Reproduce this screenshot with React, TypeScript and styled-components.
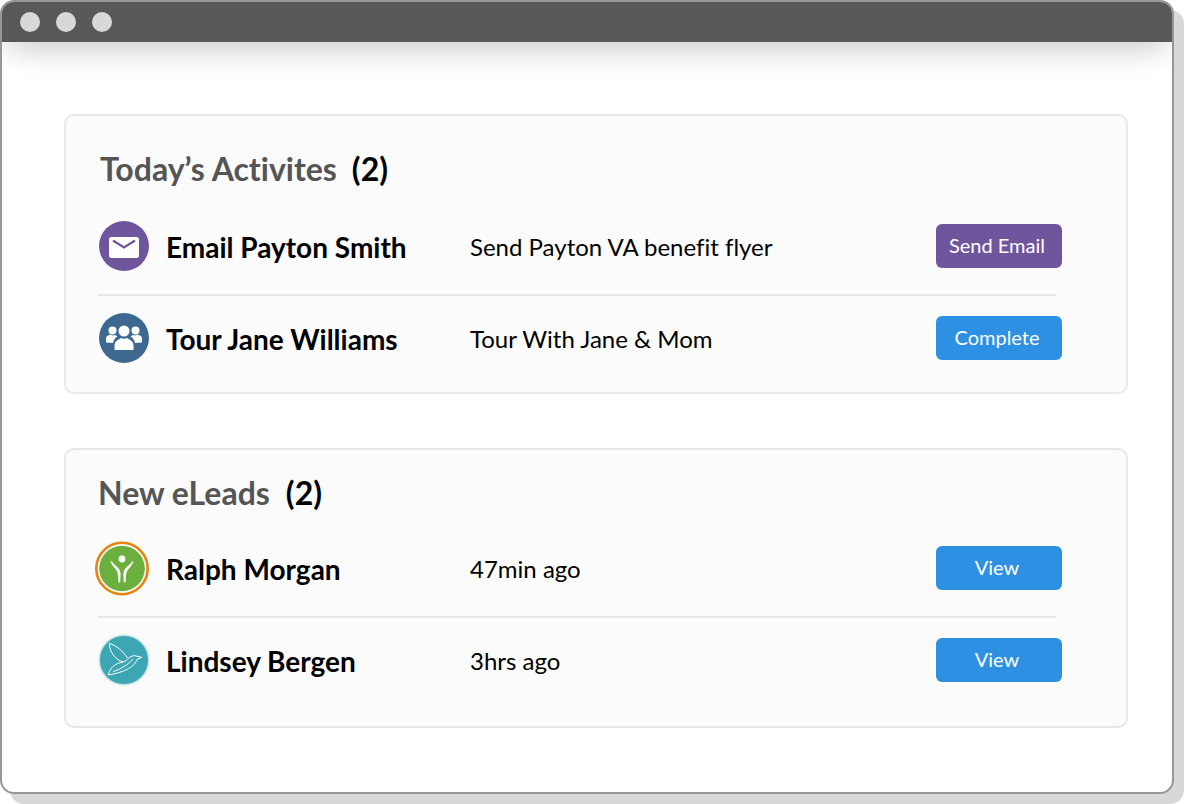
import React from "react";
import styled, { createGlobalStyle } from "styled-components";

const GlobalStyle = createGlobalStyle`
  html, body {
    margin: 0;
    padding: 0;
    background: #fff;
  }
  body {
    height: 804px;
    font-family: Lato, "Open Sans", sans-serif;
    font-variant-ligatures: none;
    overflow: hidden;
  }
`;

function MailIcon() {
  return (
    <svg width="50" height="50" viewBox="0 0 50 50">
      <circle cx="25" cy="25" r="25" fill="#6e559c" />
      <rect x="10" y="16" width="30" height="21" rx="2.5" fill="#fff" />
      <path d="M14 19.500 L25 26.500 L36 19.500" fill="none" stroke="#6e559c" strokeWidth="2.200" />
    </svg>
  );
}

function GroupIcon() {
  return (
    <svg width="50" height="50" viewBox="0 0 50 50">
      <circle cx="25" cy="25" r="25" fill="#3d6991" />
      <g fill="#fff">
        <circle cx="13.500" cy="17.500" r="4" />
        <path d="M7 29.500 v-4 q0-2.500 2.500-3.200 l2-.8 q2 1.500 4.500 .5 l2.500 1.500 q-3.500 1.500-4.500 6.500 z" />
        <circle cx="36.500" cy="17.500" r="4" />
        <path d="M43 29.500 v-4 q0-2.500-2.500-3.200 l-2-.8 q-2 1.500-4.500 .5 l-2.500 1.500 q3.500 1.500 4.500 6.500 z" />
        <circle cx="25" cy="18" r="5.500" />
        <path d="M15.500 37 v-5 q0-3 2.500-4.500 l4-2.500 q3 1.500 6 0 l4 2.500 q2.500 1.500 2.500 4.500 v5 z" />
      </g>
    </svg>
  );
}

// drawn off centre: the ring sits 2px left of the other icons
function FigureLogo() {
  return (
    <svg width="60" height="60" viewBox="0 0 60 60">
      <circle cx="28" cy="30.500" r="25.700" fill="#fff" stroke="#e8830f" strokeWidth="2.600" />
      <circle cx="28" cy="30.500" r="22.800" fill="#6bb03c" />
      <circle cx="28" cy="21" r="3.400" fill="#fff" />
      <g fill="#fff">
        <path d="M16.500 23.500 C18 29 24 31 24 38 L24.400 44 Q25.300 45 26.200 44 L26.600 36 C26.600 29 20 28 18 23.500 Q17 22.800 16.500 23.500 Z" />
        <path d="M39.500 23.500 C38 29 32 31 32 38 L31.600 44 Q30.700 45 29.800 44 L29.400 36 C29.400 29 36 28 38 23.500 Q39 22.800 39.500 23.500 Z" />
      </g>
    </svg>
  );
}

function BirdLogo() {
  return (
    <svg width="52" height="52" viewBox="0 0 52 52">
      <circle cx="26" cy="26" r="25.500" fill="#c4e3e5" />
      <circle cx="26" cy="26" r="24" fill="#3ca6b5" />
      <g fill="none" stroke="#fff" strokeWidth="1" strokeLinejoin="round">
        <path d="M11.300 9.300 C11.500 18 17 25.500 25 28" />
        <path d="M11.300 9.300 C19 12 25 17 29.500 24" />
        <path d="M10.300 41 C12.500 33 17 29.500 25 28 C29 27 30 24 33 22.500 C35 21.500 36.500 21.500 38 22 L43.700 23.300 L39 25.500 C37 32 28 38 10.300 41 Z" />
        <path d="M15 37.500 C22 35.500 30 31 35 25" />
      </g>
    </svg>
  );
}

interface IRow {
  icon: React.ReactNode;
  name: string;
  detail: string;
  action: string;
  tone?: "purple" | "blue";
}

function Row({ icon, name, detail, action, tone = "blue" }: IRow) {
  return (
    <StyledRow>
      <IconSlot>{icon}</IconSlot>
      <Name>{name}</Name>
      <Detail>{detail}</Detail>
      <ActionButton $tone={tone}>{action}</ActionButton>
    </StyledRow>
  );
}

function App() {
  return (
    <>
      <GlobalStyle />
      <BrowserWindow>
        <TitleBar>
          <Dot />
          <Dot />
          <Dot />
        </TitleBar>
        <Content>
          <Panel>
            <Heading>
              Today’s Activites<Count>(2)</Count>
            </Heading>
            <Row
              icon={<MailIcon />}
              name="Email Payton Smith"
              detail="Send Payton VA benefit flyer"
              action="Send Email"
              tone="purple"
            />
            <Divider />
            <Row
              icon={<GroupIcon />}
              name="Tour Jane Williams"
              detail="Tour With Jane & Mom"
              action="Complete"
            />
          </Panel>
          <Panel>
            <Heading $compact>
              New eLeads<Count>(2)</Count>
            </Heading>
            <Row icon={<FigureLogo />} name="Ralph Morgan" detail="47min ago" action="View" />
            <Divider />
            <Row icon={<BirdLogo />} name="Lindsey Bergen" detail="3hrs ago" action="View" />
          </Panel>
        </Content>
      </BrowserWindow>
    </>
  );
}

export default App;

const BrowserWindow = styled.div`
  box-sizing: border-box;
  width: 1174px;
  height: 794px;
  background: #fff;
  border: 2px solid #979797;
  border-radius: 14px;
  box-shadow: 10px 10px 0 #d8d8d8;
  overflow: hidden;
`;

const TitleBar = styled.div`
  position: relative;
  display: flex;
  align-items: center;
  gap: 16px;
  height: 40px;
  padding-left: 18px;
  padding-bottom: 1px;
  box-sizing: border-box;
  background: #585858;
  box-shadow: 0 10px 32px -6px rgba(0, 0, 0, 0.26);
`;

const Dot = styled.span`
  width: 20px;
  height: 20px;
  border-radius: 50%;
  background: #d8d8d8;
`;

const Content = styled.div`
  display: flex;
  flex-direction: column;
  gap: 54px;
  padding: 72px 44px 0 62px;
`;

const Panel = styled.section`
  box-sizing: border-box;
  height: 280px;
  padding: 0 64px 0 33px;
  background: #fbfbfb;
  border: 2px solid #e8e8e8;
  border-radius: 10px;
`;

const Heading = styled.h2<{ $compact?: boolean }>`
  display: flex;
  align-items: center;
  gap: ${({ $compact }) => ($compact ? "16px" : "15px")};
  height: 40px;
  margin: 0 0 0 ${({ $compact }) => ($compact ? "-1px" : "0")};
  padding-left: ${({ $compact }) => ($compact ? "0" : "1px")};
  padding-top: ${({ $compact }) => ($compact ? "22px" : "32px")};
  padding-bottom: ${({ $compact }) => ($compact ? "14px" : "16px")};
  font-size: 32px;
  font-weight: 700;
  color: #555;
`;

const Count = styled.span`
  color: #000;
`;

const StyledRow = styled.div`
  display: grid;
  grid-template-columns: 67px 304px 466px 126px;
  align-items: center;
  height: 84px;
`;

const IconSlot = styled.div`
  display: flex;
  align-items: center;
  justify-content: center;
  width: 50px;
  height: 50px;

  svg {
    flex: none;
  }
`;

const Name = styled.div`
  padding-top: 2px;
  font-size: 28px;
  font-weight: 700;
  color: #000;
`;

const Detail = styled.div`
  font-size: 24px;
  color: #000;
`;

const ActionButton = styled.button<{ $tone: "purple" | "blue" }>`
  height: 44px;
  padding: 0 4px 2px 0;
  border: 0;
  border-radius: 6px;
  background: ${({ $tone }) => ($tone === "purple" ? "#6e559c" : "#2e90e3")};
  color: #fff;
  font-family: inherit;
  font-size: 20px;
`;

const Divider = styled.div`
  width: 958px;
  height: 2px;
  margin: 6px 0 0 -1px;
  background: #e8e8e8;
`;
